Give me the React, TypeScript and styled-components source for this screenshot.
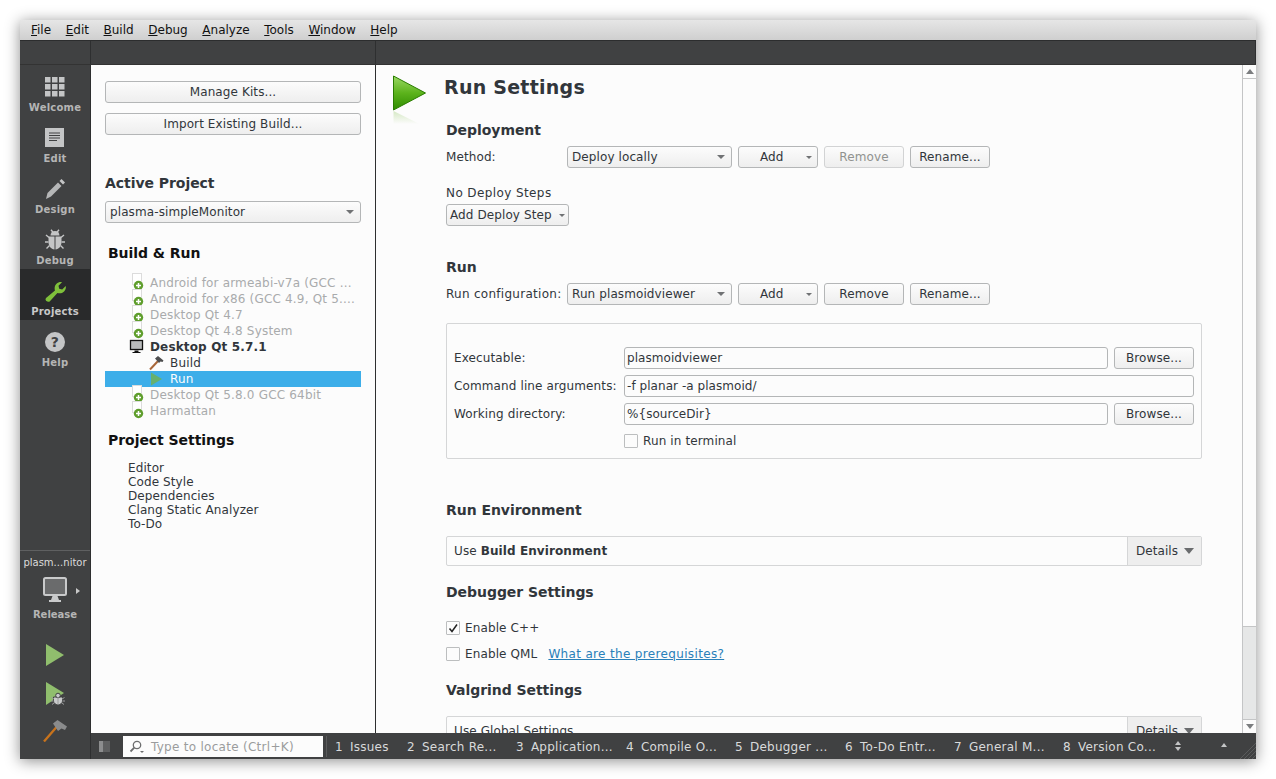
import React from "react";
import styled, { createGlobalStyle } from "styled-components";

const Global = createGlobalStyle`
  html, body { margin: 0; padding: 0; background: #fff; width: 1276px; height: 779px; overflow: hidden; }
  * { box-sizing: border-box; }
  body { font-family: "DejaVu Sans", sans-serif; font-size: 12px; color: #31363b; }
`;

const Page = styled.div`
  width: 1276px; height: 779px; padding: 20px; background: #fff;
`;
const Win = styled.div`
  position: relative; width: 1236px; height: 739px; display: flex; flex-direction: column;
  background: #fcfcfc; box-shadow: 0 2px 14px rgba(0,0,0,.45);
  overflow: hidden;
`;
const MenuBar = styled.div`
  height: 20px; flex: none; display: flex; padding-left: 11px; gap: 14.6px; align-items: center;
  background: linear-gradient(#e6e6e6, #cfcfcf); color: #111; line-height: 20px;
`;
const MenuKey = styled.span`text-decoration: underline;`;
const Top = styled.div`
  height: 25px; flex: none; background: #404142; display: flex; border-top: 1px solid #2c2d2e; border-bottom: 1px solid #333;
`;
const TopCell = styled.div<{ $w?: number }>`
  width: ${p => p.$w ? p.$w + "px" : "auto"}; flex: ${p => p.$w ? "none" : 1}; border-right: 1px solid #2e2f30;
`;
const Body = styled.div`
  flex: 1; display: flex; min-height: 0;
`;
const Side = styled.div`
  width: 71px; flex: none; background: #404142; border-right: 1px solid #2e2f30; display: flex; flex-direction: column;
`;
const Mode = styled.div<{ $on?: boolean }>`
  height: 51px; flex: none; display: flex; flex-direction: column; align-items: center; padding-top: 11px;
  background: ${p => p.$on ? "#292a2b" : "transparent"};
  color: ${p => p.$on ? "#c8c8c8" : "#b5b5b5"}; font-size: 10px; font-weight: bold; letter-spacing: .2px;
  svg { display: block; height: 22px; margin-bottom: 4px; }
  span { line-height: 12px; }
`;
const SideSpace = styled.div`flex: 1;`;
const KitBox = styled.div`
  flex: none; height: 209px; border-top: 1px solid #5f6061; display: flex; flex-direction: column; align-items: center;
  color: #dcdcdc; font-size: 10px; position: relative;
`;
const KitName = styled.div`margin-top: 5px; line-height: 13px; white-space: nowrap; word-spacing: -3px;`;
const KitMon = styled.div`position: relative; margin-top: 8px; height: 28px; display: flex; justify-content: center; width: 100%;`;
const KitCaret = styled.i`
  position: absolute; left: 56px; top: 11px; border-left: 4px solid #c8c8c8; border-top: 3.5px solid transparent; border-bottom: 3.5px solid transparent;
`;
const KitLabel = styled.div`color: #b5b5b5; font-weight: bold; font-size: 10px; margin-top: 3px; line-height: 13px;`;
const ActionIcon = styled.div<{ $mt: number; $h: number }>`margin-top: ${p => p.$mt}px; height: ${p => p.$h}px; display: flex; justify-content: center;`;

const Right = styled.div`flex: 1; min-width: 0; display: flex; flex-direction: column;`;
const Work = styled.div`flex: 1; min-height: 0; display: flex;`;
const Panel = styled.div`
  width: 285px; flex: none; background: #fcfcfc; border-right: 1px solid #2e2f30; padding: 16px 14px 0 14px; display: flex; flex-direction: column; color: #31363b;
`;
const Btn = styled.div<{ $w?: number; $dis?: boolean; $mt?: number }>`
  height: 22px; flex: none; ${p => p.$w ? `width:${p.$w}px;` : ""}
  margin-top: ${p => p.$mt ?? 0}px;
  border: 1px solid ${p => p.$dis ? "#d2d3d4" : "#b4b6b7"}; border-radius: 3px; background: linear-gradient(#fcfcfc, #eeeeee);
  color: ${p => p.$dis ? "#90928f" : "#31363b"}; display: flex; align-items: center; justify-content: center; line-height: 20px; white-space: nowrap; letter-spacing: .1px;
`;
const Combo = styled(Btn)<{ $pl?: number; $pr?: number }>`
  justify-content: space-between; padding: 0 ${p => p.$pr ?? 6}px 0 ${p => p.$pl ?? 4}px;
`;
const Caret = styled.i<{ $s?: number }>`
  display: block; flex: none; width: 0; height: 0;
  border-left: ${p => p.$s ?? 4}px solid transparent; border-right: ${p => p.$s ?? 4}px solid transparent; border-top: ${p => p.$s ?? 4}px solid #707274;
`;
const Sec = styled.div<{ $mt: number; $pl?: number; $c?: string }>`
  margin-top: ${p => p.$mt}px; padding-left: ${p => p.$pl ?? 0}px; font-size: 14px; font-weight: bold; line-height: 18px; color: ${p => p.$c ?? "#31363b"}; white-space: nowrap; letter-spacing: -.05px;
`;
const Tree = styled.div`margin-top: 13px; display: flex; flex-direction: column;`;
const TreeRow = styled.div<{ $sel?: boolean; $dim?: boolean; $bold?: boolean; $sub?: boolean }>`
  height: 16px; display: flex; align-items: center; white-space: nowrap; line-height: 16px; padding-left: ${p => p.$sub ? 65 : 45}px; position: relative;
  background: ${p => p.$sel ? "#3daee9" : "transparent"};
  color: ${p => p.$sel ? "#fcfcfc" : p.$dim ? "#a9abac" : "#31363b"};
  font-weight: ${p => p.$bold ? "bold" : "normal"};
  letter-spacing: ${p => p.$bold ? ".15px" : ".18px"};
`;
const TreeIcon = styled.svg<{ $x: number }>`
  position: absolute; left: ${p => p.$x}px; top: 0; width: 18px; height: 16px; overflow: visible;
`;
const SetList = styled.div`margin-top: 12px; padding-left: 23px; display: flex; flex-direction: column; line-height: 14px; letter-spacing: .1px;`;

const Main = styled.div`
  flex: 1; min-width: 0; display: flex; background: #fcfcfc; position: relative;
`;
const Scroll = styled.div`
  flex: 1; min-width: 0; overflow: hidden; position: relative; padding-left: 70px;
`;
const BigIcon = styled.svg`position: absolute; left: 16px; top: 9px; width: 36px; height: 52px;`;
const Title = styled.div`margin-top: 10px; font-size: 19px; font-weight: bold; line-height: 24px; margin-left: -2px; color: #31363b; letter-spacing: .25px;`;
const Col = styled.div`width: 756px; display: flex; flex-direction: column;`;
const Row = styled.div<{ $mt?: number; $gap?: number; $pl?: number }>`
  margin-top: ${p => p.$mt ?? 0}px; display: flex; align-items: center; gap: ${p => p.$gap ?? 6}px; min-height: 22px; white-space: nowrap; padding-left: ${p => p.$pl ?? 0}px;
`;
const TextRow = styled.div<{ $mt: number }>`margin-top: ${p => p.$mt}px; line-height: 14px; letter-spacing: .4px; white-space: nowrap;`;
const Lab = styled.div<{ $w?: number; $ls?: number }>`flex: none; width: ${p => p.$w ? p.$w + "px" : "auto"}; letter-spacing: ${p => p.$ls ?? .12}px;`;
const Group = styled.div`
  margin-top: 18px; height: 136px; border: 1px solid #d5d6d7; border-radius: 2px; padding: 23px 7px 0; display: flex; flex-direction: column;
`;
const Input = styled.div`
  flex: 1; height: 22px; border: 1px solid #b4b6b7; border-radius: 3px; background: #fcfcfc; line-height: 20px; padding-left: 2px; letter-spacing: .05px;
`;
const Check = styled.span`
  flex: none; width: 14px; height: 14px; border: 1px solid #bcbebf; border-radius: 1px; background: #fcfcfc; display: inline-flex; align-items: center; justify-content: center;
  svg { display: block; }
`;
const Link = styled.a`color: #2980b9; text-decoration: underline; margin-left: 6px; letter-spacing: .34px;`;
const DetailBox = styled.div<{ $mt: number }>`
  margin-top: ${p => p.$mt}px; height: 30px; flex: none; border: 1px solid #d5d6d7; border-radius: 2px; display: flex; align-items: center; justify-content: space-between; padding-left: 7px; background: #fcfcfc;
`;
const DetailText = styled.span`letter-spacing: .1px;`;
const DetailBtn = styled.div`
  width: 74px; height: 28px; background: #eeeeee; border-left: 1px solid #d5d6d7; display: flex; align-items: center; padding-left: 8px; gap: 6px; letter-spacing: .05px;
`;
const BigCaret = styled.i`
  display: block; width: 0; height: 0; border-left: 5.5px solid transparent; border-right: 5.5px solid transparent; border-top: 6px solid #6a6c6e;
`;
const VBar = styled.div`
  width: 14px; flex: none; border-left: 1px solid #c4c5c6; display: flex; flex-direction: column; background: #fcfcfc;
`;
const VBtn = styled.div<{ $bottom?: boolean }>`
  height: 14px; flex: none; display: flex; align-items: center; justify-content: center;
  border-${p => p.$bottom ? "top" : "bottom"}: 1px solid #c4c5c6;
`;
const VUp = styled.i`display:block;width:0;height:0;border-left:4px solid transparent;border-right:4px solid transparent;border-bottom:5px solid #7b7d7f;`;
const VDown = styled.i`display:block;width:0;height:0;border-left:4px solid transparent;border-right:4px solid transparent;border-top:5px solid #7b7d7f;`;
const VTrack = styled.div`flex: 1;`;
const VThumb = styled.div`height: 93px; flex: none; background: #e6e7e7; border-top: 1px solid #c4c5c6;`;

const Foot = styled.div`
  height: 26px; flex: none; position: relative; background: #404142; display: flex; align-items: center; color: #d9dadb; white-space: nowrap;
`;
const Pane = styled.span`
  width: 11px; height: 11px; flex: none; margin-left: 8px; background: linear-gradient(to right, #8c8d8e 0 33%, #5e5f60 33%);
`;
const Locator = styled.div`
  width: 200px; height: 21px; margin-left: 13px; flex: none; background: #fcfcfc; color: #9b9c9d; display: flex; align-items: center; padding: 1px 0 0 6px; gap: 6px; letter-spacing: .28px;
`;
const FootSep = styled.span`width: 1px; height: 21px; background: #5a5b5c; margin: 0 8px 0 3px; flex: none;`;
const Tab = styled.span<{ $w: number }>`
  width: ${p => p.$w}px; flex: none; display: flex; gap: 7px; letter-spacing: .25px; padding-top: 1px;
`;
const FootTail = styled.div`position: absolute; left: 1077px; top: 0; height: 26px; width: 20px; display: flex; flex-direction: column; align-items: center; justify-content: center; gap: 2px;`;
const Up = styled.i`display:block;width:0;height:0;border-left:3.5px solid transparent;border-right:3.5px solid transparent;border-bottom:4px solid #c4c5c6;`;
const Dn = styled.i`display:block;width:0;height:0;border-left:3.5px solid transparent;border-right:3.5px solid transparent;border-top:4px solid #c4c5c6;`;
const FootUp = styled.div`position: absolute; left: 1130px; top: 10px;`;
const Grip = styled.svg`position: absolute; right: 0; bottom: 0; width: 16px; height: 16px;`;

const Bug = () => (
  <svg width="22" height="22" viewBox="0 0 22 22">
    <path d="M6.500 6.500a4.500 4.500 0 0 1 9 0z" fill="#c4c5c6" />
    <path d="M4.500 7.500h6v13c-3.500-.3-6-3.500-6-7.500zM11.500 7.500h6V13c0 4-2.500 7.200-6 7.500z" fill="#c4c5c6" />
    <path d="M7 .8l2 2.500M15 .8l-2 2.500M2 6l3 2.500M20 6l-3 2.500M1 13h3.500M21 13h-3.500M2.500 19.500l3-3M19.500 19.500l-3-3" stroke="#c4c5c6" strokeWidth="1.400" fill="none" />
  </svg>
);
const Monitor = () => (
  <svg width="26" height="26" viewBox="0 0 26 26">
    <rect x="2" y="1" width="22" height="17" rx="1.500" fill="#6a6b6c" stroke="#c9cacb" strokeWidth="2" />
    <path d="M10.500 19h5l1.500 4H9z" fill="#c9cacb" /><rect x="7" y="23" width="12" height="2" fill="#c9cacb" />
  </svg>
);
const PlusTree = () => (
  <TreeIcon $x={24} viewBox="0 0 18 16">
    <rect x="3.500" y="-1.500" width="9" height="11" fill="#fff" stroke="#dcdcdc" />
    <circle cx="9.500" cy="10.500" r="4.700" fill="#5f9e2d" />
    <path d="M7 10.500h5M9.500 8v5" stroke="#fff" strokeWidth="1.500" />
  </TreeIcon>
);

const kits = ["Android for armeabi-v7a (GCC ...", "Android for x86 (GCC 4.9, Qt 5....", "Desktop Qt 4.7", "Desktop Qt 4.8 System"];
const tabs: [string, string, number][] = [
  ["1", "Issues", 72], ["2", "Search Re...", 109], ["3", "Application...", 110], ["4", "Compile O...", 109], ["5", "Debugger ...", 110],
  ["6", "To-Do Entr...", 109], ["7", "General M...", 109], ["8", "Version Co...", 100],
];

export default function App() {
  return (
    <Page>
      <Global />
      <Win>
        <MenuBar>
          {["File", "Edit", "Build", "Debug", "Analyze", "Tools", "Window", "Help"].map(m => (
            <span key={m}><MenuKey>{m[0]}</MenuKey>{m.slice(1)}</span>
          ))}
        </MenuBar>
        <Top><TopCell $w={71} /><TopCell $w={285} /><TopCell /></Top>
        <Body>
          <Side>
            <Mode>
              <svg width="20" height="22" viewBox="0 0 20 22">
                {[1, 8, 15].flatMap(y => [0, 7, 14].map(x => <rect key={x + "-" + y} x={x} y={y} width="5.500" height="5.500" fill="#c4c5c6" />))}
              </svg>
              <span>Welcome</span>
            </Mode>
            <Mode>
              <svg width="20" height="22" viewBox="0 0 20 22">
                <rect x="0" y="1" width="19" height="19" fill="#c4c5c6" />
                <path d="M4 6h11M4 8.500h11M4 11h11M4 13.500h8" stroke="#404142" strokeWidth="1" />
              </svg>
              <span>Edit</span>
            </Mode>
            <Mode>
              <svg width="22" height="22" viewBox="0 0 22 22">
                <path d="M2 21l1.500-6L14 4.500l3.500 3.500L7 18.500z" fill="#b5b6b7" />
                <path d="M15.500 3l2-2 3.500 3.500-2 2z" fill="#c4c5c6" />
              </svg>
              <span>Design</span>
            </Mode>
            <Mode><Bug /><span>Debug</span></Mode>
            <Mode $on>
              <svg width="22" height="22" viewBox="0 0 22 22">
                <path d="M2 20.500c-.8-.8-.5-2 .3-2.700l8.700-7.300c-.8-2.500-.3-5 1.500-6.800 1.500-1.400 3.700-2 5.500-1.500l-3.500 3.500.7 3 3 .7 3.500-3.500c.5 2-.2 4-1.600 5.500-1.800 1.800-4.300 2.300-6.700 1.500l-7.500 8.300c-.7.800-2.200 1-3.900-.5z" fill="#7fc03b" />
              </svg>
              <span>Projects</span>
            </Mode>
            <Mode>
              <svg width="22" height="22" viewBox="0 0 22 22">
                <circle cx="11" cy="11" r="10" fill="#c4c5c6" />
                <text x="11" y="16" textAnchor="middle" fontFamily="DejaVu Sans" fontWeight="bold" fontSize="14" fill="#404142">?</text>
              </svg>
              <span>Help</span>
            </Mode>
            <SideSpace />
            <KitBox>
              <KitName>plasm... nitor</KitName>
              <KitMon><Monitor /><KitCaret /></KitMon>
              <KitLabel>Release</KitLabel>
              <ActionIcon $mt={23} $h={22}>
                <svg width="18" height="22" viewBox="0 0 18 22"><path d="M0 0l18 11L0 22z" fill="#90be6d" /></svg>
              </ActionIcon>
              <ActionIcon $mt={16} $h={23}>
                <svg width="20" height="24" viewBox="0 0 20 24" style={{ marginLeft: 2 }}>
                  <path d="M0 0l18 11L0 23z" fill="#90be6d" />
                  <path d="M7.500 15h9v4c0 2-2 3.800-4.500 3.800S7.500 21 7.500 19z" fill="#c9cacb" stroke="#404142" strokeWidth="1" />
                  <circle cx="12" cy="13.500" r="2.300" fill="#c9cacb" stroke="#404142" strokeWidth="1" />
                  <path d="M12 15v8M5.500 15.500l2.500 1.500M18.500 15.500L16 17M5 19h2.500M19 19h-2.500M6 22.500L8 21M18 22.500L16 21" stroke="#9a9b9c" strokeWidth="1" />
                </svg>
              </ActionIcon>
              <ActionIcon $mt={15} $h={22}>
                <svg width="24" height="22" viewBox="0 0 24 22">
                  <path d="M1 21.500L14 6.500" stroke="#c8731c" strokeWidth="2.300" fill="none" />
                  <path d="M10 3.500L14.500 0 24 6.500 22 10l-3.500-1.500-3.500 2.500z" fill="#8a8b8c" />
                </svg>
              </ActionIcon>
            </KitBox>
          </Side>
          <Right>
            <Work>
              <Panel>
                <Btn>Manage Kits...</Btn>
                <Btn $mt={10}>Import Existing Build...</Btn>
                <Sec $mt={39}>Active Project</Sec>
                <Combo $mt={9}>plasma-simpleMonitor<Caret /></Combo>
                <Sec $mt={21} $pl={3} $c="#111">Build &amp; Run</Sec>
                <Tree>
                  {kits.map(k => <TreeRow key={k} $dim><PlusTree />{k}</TreeRow>)}
                  <TreeRow $bold>
                    <TreeIcon $x={24} viewBox="0 0 18 16">
                      <rect x="1.500" y="1.500" width="12" height="9" fill="#b9bbbc" stroke="#111" strokeWidth="1.300" />
                      <path d="M5.500 11.500h4v1.500h2v1h-8v-1h2z" fill="#111" />
                    </TreeIcon>
                    Desktop Qt 5.7.1
                  </TreeRow>
                  <TreeRow $sub>
                    <TreeIcon $x={44} viewBox="0 0 18 16">
                      <path d="M1 14.500L9 6" stroke="#a8673a" strokeWidth="2" />
                      <path d="M6 3.500l3-2.500 5.500 4.500-1 1.500-2-.5-1.500 1.500z" fill="#4d4e4f" />
                    </TreeIcon>
                    Build
                  </TreeRow>
                  <TreeRow $sub $sel>
                    <TreeIcon $x={46} viewBox="0 0 18 16"><path d="M0 1.500l11 6.500L0 14.500z" fill="#67b06f" /></TreeIcon>
                    Run
                  </TreeRow>
                  <TreeRow $dim><PlusTree />Desktop Qt 5.8.0 GCC 64bit</TreeRow>
                  <TreeRow $dim><PlusTree />Harmattan</TreeRow>
                </Tree>
                <Sec $mt={12} $pl={3} $c="#111">Project Settings</Sec>
                <SetList>
                  <span>Editor</span><span>Code Style</span><span>Dependencies</span><span>Clang Static Analyzer</span><span>To-Do</span>
                </SetList>
              </Panel>
              <Main>
                <Scroll>
                  <BigIcon viewBox="0 0 36 52">
                    <defs>
                      <linearGradient id="bi" x1="0" y1="0" x2="0" y2="1"><stop offset="0" stopColor="#9bd964" /><stop offset=".5" stopColor="#5cb31c" /><stop offset="1" stopColor="#2f8c00" /></linearGradient>
                      <linearGradient id="br" x1="0" y1="0" x2="0" y2="1"><stop offset="0" stopColor="#d5e8c4" /><stop offset="1" stopColor="#fcfcfc" /></linearGradient>
                    </defs>
                    <path d="M1.500 2l32 17-32 17z" fill="url(#bi)" stroke="#2a7d00" strokeWidth="1" />
                    <path d="M1.500 37l26 13H1.500z" fill="url(#br)" />
                  </BigIcon>
                  <Col>
                    <Title>Run Settings</Title>
                    <Sec $mt={22}>Deployment</Sec>
                    <Row $mt={7}>
                      <Lab $w={115} $ls={.1}>Method:</Lab>
                      <Combo $w={165}>Deploy locally<Caret /></Combo>
                      <Combo $w={80} $pl={21} $pr={5}>Add<Caret $s={3.5} /></Combo>
                      <Btn $w={80} $dis>Remove</Btn>
                      <Btn $w={80}>Rename...</Btn>
                    </Row>
                    <TextRow $mt={18}>No Deploy Steps</TextRow>
                    <Row $mt={4}><Combo $w={123} $pl={3} $pr={3}>Add Deploy Step<Caret $s={3} /></Combo></Row>
                    <Sec $mt={32}>Run</Sec>
                    <Row $mt={7}>
                      <Lab $w={115} $ls={.28}>Run configuration:</Lab>
                      <Combo $w={165}>Run plasmoidviewer<Caret /></Combo>
                      <Combo $w={80} $pl={21} $pr={5}>Add<Caret $s={3.5} /></Combo>
                      <Btn $w={80}>Remove</Btn>
                      <Btn $w={80}>Rename...</Btn>
                    </Row>
                    <Group>
                      <Row><Lab $w={164}>Executable:</Lab><Input>plasmoidviewer</Input><Btn $w={80}>Browse...</Btn></Row>
                      <Row $mt={6}><Lab $w={164}>Command line arguments:</Lab><Input>-f planar -a plasmoid/</Input></Row>
                      <Row $mt={6}><Lab $w={164}>Working directory:</Lab><Input>%{"{"}sourceDir{"}"}</Input><Btn $w={80}>Browse...</Btn></Row>
                      <Row $mt={5} $pl={170} $gap={5}><Check /><Lab>Run in terminal</Lab></Row>
                    </Group>
                    <Sec $mt={42}>Run Environment</Sec>
                    <DetailBox $mt={17}>
                      <DetailText>Use <b>Build Environment</b></DetailText>
                      <DetailBtn>Details<BigCaret /></DetailBtn>
                    </DetailBox>
                    <Sec $mt={17}>Debugger Settings</Sec>
                    <Row $mt={16} $gap={5}>
                      <Check><svg width="10" height="10" viewBox="0 0 10 10"><path d="M1.500 5.500l2.500 3 5-7" stroke="#222" strokeWidth="1.500" fill="none" /></svg></Check>
                      <Lab>Enable C++</Lab>
                    </Row>
                    <Row $mt={4} $gap={5}>
                      <Check /><Lab>Enable QML</Lab><Link>What are the prerequisites?</Link>
                    </Row>
                    <Sec $mt={16}>Valgrind Settings</Sec>
                    <DetailBox $mt={17}>
                      <DetailText>Use Global Settings</DetailText>
                      <DetailBtn>Details<BigCaret /></DetailBtn>
                    </DetailBox>
                  </Col>
                </Scroll>
                <VBar>
                  <VBtn><VUp /></VBtn>
                  <VTrack />
                  <VThumb />
                  <VBtn $bottom><VDown /></VBtn>
                </VBar>
              </Main>
            </Work>
            <Foot>
              <Pane />
              <Locator>
                <svg width="16" height="14" viewBox="0 0 16 14">
                  <circle cx="8" cy="5" r="3.700" fill="none" stroke="#6d6e6f" strokeWidth="1.300" />
                  <path d="M5.300 7.700L1.500 11.500" stroke="#6d6e6f" strokeWidth="1.800" />
                  <path d="M11 11h4l-2 2z" fill="#6d6e6f" />
                </svg>
                Type to locate (Ctrl+K)
              </Locator>
              <FootSep />
              {tabs.map(([n, t, w]) => <Tab key={n} $w={w}><span>{n}</span><span>{t}</span></Tab>)}
              <FootTail><Up /><Dn /></FootTail>
              <FootUp><Up /></FootUp>
              <Grip viewBox="0 0 16 16">
                <path d="M0 16L16 0M4 16L16 4M8 16L16 8M12 16L16 12" stroke="#5a5b5c" strokeWidth="1" />
              </Grip>
            </Foot>
          </Right>
        </Body>
      </Win>
    </Page>
  );
}
